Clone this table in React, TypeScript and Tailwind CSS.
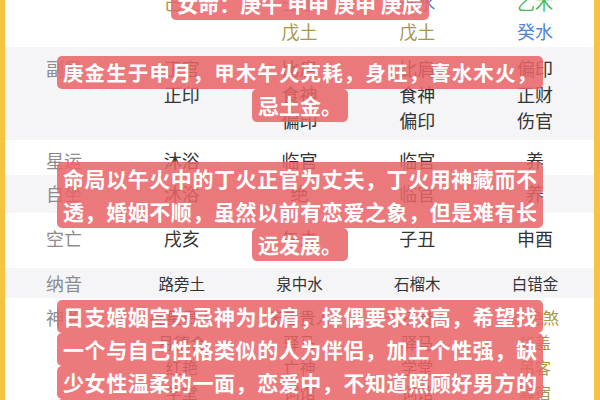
import React from 'react';

type Line = { t: string; c?: string };

interface RowDef {
  label: string;
  cells: Line[][];
  rowClass: string;
  textClass: string;
}

const TAN = 'text-[#a8964a]';
const BLUE = 'text-[#4f86d8]';
const GREEN = 'text-[#49b95a]';
const DARK = 'text-[#333333]';

const rows: RowDef[] = [
  {
    label: '',
    rowClass: 'h-[47px] bg-white',
    textClass: '-mt-[12px] leading-[29px] text-[18px]',
    cells: [
      [{ t: '己土', c: TAN }, { t: '' }],
      [{ t: '壬水', c: BLUE }, { t: '戊土', c: TAN }],
      [{ t: '壬水', c: BLUE }, { t: '戊土', c: TAN }],
      [{ t: '乙木', c: GREEN }, { t: '癸水', c: BLUE }],
    ],
  },
  {
    label: '副星',
    rowClass: 'h-[93px] bg-[#f5f5f7]',
    textClass: 'pt-[8px] leading-[26px] text-[18px]',
    cells: [
      [{ t: '正官' }, { t: '正印' }],
      [{ t: '比肩' }, { t: '食神' }, { t: '偏印' }],
      [{ t: '比肩' }, { t: '食神' }, { t: '偏印' }],
      [{ t: '偏印' }, { t: '正财' }, { t: '伤官' }],
    ],
  },
  {
    label: '星运',
    rowClass: 'h-[35px] bg-white',
    textClass: 'pt-[7px] leading-[26px] text-[18px]',
    cells: [[{ t: '沐浴' }], [{ t: '临官' }], [{ t: '临官' }], [{ t: '养' }]],
  },
  {
    label: '自坐',
    rowClass: 'h-[38px] bg-[#f5f5f7]',
    textClass: 'pt-[5px] leading-[26px] text-[18px]',
    cells: [[{ t: '沐浴' }], [{ t: '绝' }], [{ t: '临官' }], [{ t: '养' }]],
  },
  {
    label: '空亡',
    rowClass: 'h-[55px] bg-white',
    textClass: 'pt-[12px] leading-[26px] text-[18px]',
    cells: [[{ t: '戌亥' }], [{ t: '午未' }], [{ t: '子丑' }], [{ t: '申酉' }]],
  },
  {
    label: '纳音',
    rowClass: 'h-[30px] bg-[#f5f5f7]',
    textClass: 'pt-[2px] leading-[26px] text-[15.5px]',
    cells: [[{ t: '路旁土' }], [{ t: '泉中水' }], [{ t: '石榴木' }], [{ t: '白错金' }]],
  },
  {
    label: '神煞',
    rowClass: 'h-[110px] bg-white',
    textClass: 'pt-[7px] leading-[25px] text-[16px]',
    cells: [
      [{ t: '福星贵人' }, { t: '月德合' }, { t: '红艳' }, { t: '学堂' }],
      [{ t: '天乙贵人' }, { t: '驿马' }, { t: '亡神' }, { t: '词馆' }],
      [{ t: '天乙贵人' }, { t: '驿马' }, { t: '学堂' }, { t: '词馆' }],
      [
        { t: '红艳煞', c: TAN },
        { t: '华盖', c: TAN },
        { t: '吊客', c: TAN },
        { t: '寡宿', c: TAN },
      ],
    ],
  },
];

// one subtitle line; full lines are stretched to the fixed box width
const Caption = ({ text, full, small }: { text: string; full?: boolean; small?: boolean }) => (
  <div
    className={`h-[33px] leading-[33px] rounded-[5px] bg-[rgba(233,100,103,0.86)] px-[6px] whitespace-nowrap font-bold text-white ${
      small ? 'text-[20.5px]' : 'text-[21px]'
    } ${full ? 'w-[486px] text-justify [text-align-last:justify]' : ''}`}
  >
    {text}
  </div>
);

export default function App() {
  return (
    <div className="relative h-[400px] w-[600px] overflow-hidden bg-white font-['Noto_Sans_CJK_SC','Noto_Sans',sans-serif]">
      <div className="flex h-full">
        <div className="w-[5px] shrink-0 bg-[#f6c343]" />
        <div className="flex-1">
          {rows.map((row, i) => (
            <div key={i} className={`grid grid-cols-5 overflow-hidden ${row.rowClass}`}>
              <div className={`text-center text-[#8c8c8c] ${row.textClass} text-[18px]`}>
                {row.label}
              </div>
              {row.cells.map((cell, j) => (
                <div key={j} className={`text-center ${row.textClass}`}>
                  {cell.map((line, k) => (
                    <div key={k} className={`${line.c || DARK} whitespace-nowrap`}>
                      {line.t || '\u00a0'}
                    </div>
                  ))}
                </div>
              ))}
            </div>
          ))}
        </div>
        <div className="w-[6px] shrink-0 bg-[#f6c343]" />
      </div>

      {/* Subtitle overlays */}
      <div className="absolute left-0 right-0 top-[-13px] flex flex-col items-center">
        <Caption text="女命：庚午 甲申 庚申 庚辰" />
      </div>
      <div className="absolute left-0 right-0 top-[56px] flex flex-col items-center">
        <Caption text="庚金生于申月，甲木午火克耗，身旺，喜水木火，" full small />
        <Caption text="忌土金。" />
      </div>
      <div className="absolute left-0 right-0 top-[162px] flex flex-col items-center">
        <Caption text="命局以午火中的丁火正官为丈夫，丁火用神藏而不" full />
        <Caption text="透，婚姻不顺，虽然以前有恋爱之象，但是难有长" full />
        <Caption text="远发展。" />
      </div>
      <div className="absolute left-0 right-0 top-[300px] flex flex-col items-center">
        <Caption text="日支婚姻宫为忌神为比肩，择偶要求较高，希望找" full />
        <Caption text="一个与自己性格类似的人为伴侣，加上个性强，缺" full />
        <Caption text="少女性温柔的一面，恋爱中，不知道照顾好男方的" full />
        <Caption text="感受，婚姻中容易发生争执，需要多加包容。" full />
      </div>
    </div>
  );
}
